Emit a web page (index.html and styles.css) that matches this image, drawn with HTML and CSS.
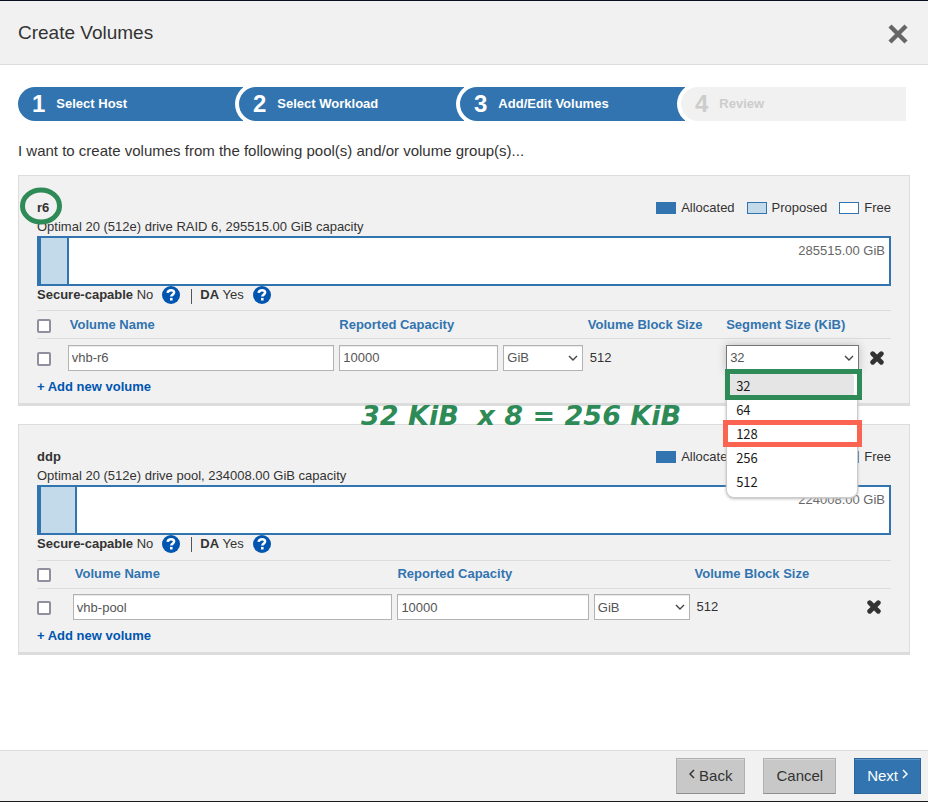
FILE: index.html
```html
<!DOCTYPE html>
<html lang="en">
<head>
<meta charset="utf-8">
<meta name="viewport" content="width=device-width, initial-scale=1">
<title>Create Volumes</title>
<link rel="stylesheet" href="styles.css">
</head>
<body>
<svg class="sprite" aria-hidden="true">
  <symbol id="help" viewBox="0 0 18 18">
    <circle cx="9" cy="9" r="9" fill="#0055b0"/>
    <path d="M5.6 6.9C5.9 5 7.3 4.2 9 4.2c1.8 0 3.1 1 3.1 2.4 0 2.1-2.8 1.9-2.8 4" fill="none" stroke="#fff" stroke-width="2.5"/>
    <rect x="8" y="11.9" width="2.6" height="2.6" fill="#fff"/>
  </symbol>
  <symbol id="remove" viewBox="0 0 14 14">
    <path d="M2.7 2.7l8.6 8.6M11.3 2.7l-8.6 8.6" fill="none" stroke="#333" stroke-width="4.8" stroke-linecap="round"/>
  </symbol>
</svg>

<header class="header">
  <h1 class="title">Create Volumes</h1>
  <button class="icon-button" type="button" aria-label="Close">
    <svg class="close-icon" viewBox="0 0 20 20"><path d="M2 2l16 16M18 2l-16 16" fill="none" stroke="#666" stroke-width="4.4"/></svg>
  </button>
</header>

<main class="content">
  <ol class="steps">
    <li class="step"><span class="step-number">1</span>Select Host</li>
    <li class="step"><span class="step-number">2</span>Select Workload</li>
    <li class="step"><span class="step-number">3</span>Add/Edit Volumes</li>
    <li class="step step-pending"><span class="step-number">4</span>Review</li>
  </ol>

  <p class="intro">I want to create volumes from the following pool(s) and/or volume group(s)...</p>

  <section class="panel">
    <div class="panel-head">
      <h2 class="panel-name">r6<svg class="name-ring" viewBox="0 0 42 38" aria-hidden="true"><ellipse cx="21" cy="19" rx="18.5" ry="16" fill="none" stroke="#2e8b57" stroke-width="5"/></svg></h2>
      <ul class="legend">
        <li><span class="swatch swatch-allocated"></span>Allocated</li>
        <li><span class="swatch swatch-proposed"></span>Proposed</li>
        <li><span class="swatch"></span>Free</li>
      </ul>
    </div>
    <p class="summary">Optimal 20 (512e) drive RAID 6, 295515.00 GiB capacity</p>
    <div class="capacity"><span class="proposed" style="width:3.3%"></span><span class="free">285515.00 GiB</span></div>
    <div class="facts">
      <span><b>Secure-capable</b> No</span>
      <button class="icon-button" type="button" aria-label="About secure-capable"><svg class="help-icon"><use href="#help"/></svg></button>
      <span class="divider"></span>
      <span><b>DA</b> Yes</span>
      <button class="icon-button" type="button" aria-label="About data assurance"><svg class="help-icon"><use href="#help"/></svg></button>
    </div>
    <table class="volumes volumes-segmented">
      <colgroup><col class="col-check"><col class="col-name"><col class="col-capacity"><col class="col-block"><col class="col-segment"><col></colgroup>
      <thead>
        <tr><th><input class="check" type="checkbox" aria-label="Select all r6 volumes"></th><th class="name-head">Volume Name</th><th>Reported Capacity</th><th>Volume Block Size</th><th>Segment Size (KiB)</th><th></th></tr>
      </thead>
      <tbody>
        <tr>
          <td><input class="check" type="checkbox" aria-label="Select vhb-r6"></td>
          <td class="field-cell"><input class="field" type="text" value="vhb-r6" aria-label="Volume name"></td>
          <td class="field-cell"><div class="pair"><input class="field" type="text" value="10000" aria-label="Reported capacity"><span class="select-wrap"><select class="field" aria-label="Capacity unit"><option>GiB</option></select><svg class="chevron" viewBox="0 0 10 6"><path d="M1 1l4 4 4-4"/></svg></span></div></td>
          <td class="block-cell">512</td>
          <td class="field-cell">
            <div class="select-wrap">
              <select class="field field-open" aria-label="Segment size (KiB)"><option>32</option><option>64</option><option>128</option><option>256</option><option>512</option></select>
              <svg class="chevron" viewBox="0 0 10 6"><path d="M1 1l4 4 4-4"/></svg>
              <ul class="menu" role="listbox" aria-label="Segment size options">
                <li class="option option-current" role="option" aria-selected="true">32</li>
                <li class="option" role="option">64</li>
                <li class="option" role="option">128</li>
                <li class="option" role="option">256</li>
                <li class="option" role="option">512</li>
              </ul>
              <span class="mark mark-green"></span>
              <span class="mark mark-red"></span>
            </div>
          </td>
          <td class="remove-cell"><button class="icon-button" type="button" aria-label="Remove vhb-r6"><svg class="remove-icon"><use href="#remove"/></svg></button></td>
        </tr>
      </tbody>
    </table>
    <a class="add" href="#">+ Add new volume</a>
    <p class="note">32 KiB  x 8 = 256 KiB</p>
  </section>

  <section class="panel">
    <div class="panel-head">
      <h2 class="panel-name">ddp</h2>
      <ul class="legend">
        <li><span class="swatch swatch-allocated"></span>Allocated</li>
        <li><span class="swatch swatch-proposed"></span>Proposed</li>
        <li><span class="swatch"></span>Free</li>
      </ul>
    </div>
    <p class="summary">Optimal 20 (512e) drive pool, 234008.00 GiB capacity</p>
    <div class="capacity"><span class="proposed" style="width:4.27%"></span><span class="free">224008.00 GiB</span></div>
    <div class="facts">
      <span><b>Secure-capable</b> No</span>
      <button class="icon-button" type="button" aria-label="About secure-capable"><svg class="help-icon"><use href="#help"/></svg></button>
      <span class="divider"></span>
      <span><b>DA</b> Yes</span>
      <button class="icon-button" type="button" aria-label="About data assurance"><svg class="help-icon"><use href="#help"/></svg></button>
    </div>
    <table class="volumes volumes-plain">
      <colgroup><col class="col-check"><col class="col-name"><col class="col-capacity"><col class="col-block"><col></colgroup>
      <thead>
        <tr><th><input class="check" type="checkbox" aria-label="Select all ddp volumes"></th><th class="name-head">Volume Name</th><th>Reported Capacity</th><th>Volume Block Size</th><th></th></tr>
      </thead>
      <tbody>
        <tr>
          <td><input class="check" type="checkbox" aria-label="Select vhb-pool"></td>
          <td class="field-cell"><input class="field" type="text" value="vhb-pool" aria-label="Volume name"></td>
          <td class="field-cell"><div class="pair"><input class="field" type="text" value="10000" aria-label="Reported capacity"><span class="select-wrap"><select class="field" aria-label="Capacity unit"><option>GiB</option></select><svg class="chevron" viewBox="0 0 10 6"><path d="M1 1l4 4 4-4"/></svg></span></div></td>
          <td class="block-cell">512</td>
          <td class="remove-cell"><button class="icon-button" type="button" aria-label="Remove vhb-pool"><svg class="remove-icon"><use href="#remove"/></svg></button></td>
        </tr>
      </tbody>
    </table>
    <a class="add" href="#">+ Add new volume</a>
  </section>
</main>

<footer class="footer">
  <button class="button" type="button"><svg class="arrow" viewBox="0 0 6 10"><path d="M5 1L1 5l4 4"/></svg>Back</button>
  <button class="button" type="button">Cancel</button>
  <button class="button button-primary" type="button">Next<svg class="arrow" viewBox="0 0 6 10"><path d="M1 1l4 4-4 4"/></svg></button>
</footer>
</body>
</html>
```
FILE: styles.css
```css
* { box-sizing: border-box; }

body {
  display: flex;
  flex-direction: column;
  min-height: 100vh;
  margin: 0;
  border-top: 1px solid #0b1020;
  border-bottom: 1px solid #1c1c1c;
  background: #fff;
  color: #333;
  font: 13px/20px "Liberation Sans", Arial, sans-serif;
}

h1, h2, p, ul, ol { margin: 0; padding: 0; }
ul, ol { list-style: none; }

.sprite { display: none; }

.header {
  display: flex;
  align-items: center;
  justify-content: space-between;
  height: 64px;
  padding: 0 20px 0 18px;
  border-bottom: 1px solid #dcdcdc;
  background: #f1f1f1;
}

.title { font-size: 19px; font-weight: 400; }

.icon-button {
  display: flex;
  padding: 0;
  border: 0;
  background: none;
}

.close-icon { width: 20px; height: 20px; margin-top: 3px; }

.content { flex: 1; padding: 22px 18px 0; }

.steps { display: flex; margin-right: 4px; }

.step {
  display: flex;
  flex: 1;
  align-items: center;
  gap: 11px;
  height: 34px;
  padding-left: 14px;
  border-radius: 17px 0 0 17px;
  background: #3174af;
  color: #fff;
  font-weight: 700;
}

.step + .step {
  margin-left: -4px;
  box-shadow: 0 0 0 4px #fff;
}

.step-number { font-size: 24px; }

.step-pending { background: #f1f1f1; color: #ccc; }

.intro { margin: 20px 0 14px; font-size: 15px; }

.panel {
  position: relative;
  margin-bottom: 18px;
  padding: 22px 18px 6px;
  border: 1px solid #dcdcdc;
  border-bottom-width: 3px;
  background: #f1f1f1;
}

.panel-head {
  display: flex;
  justify-content: space-between;
  line-height: 20px;
}

.panel-name { position: relative; font-size: 13px; }

.name-ring {
  position: absolute;
  top: -11px;
  left: -17px;
  width: 42px;
  height: 38px;
}

.legend { display: flex; gap: 12px; }
.legend li { display: flex; align-items: center; gap: 5px; }

.swatch {
  width: 20px;
  height: 12px;
  border: 1px solid #3174af;
  background: #fff;
}
.swatch-allocated { background: #3174af; }
.swatch-proposed { background: #c3daea; }

.summary { line-height: 18px; }

.capacity {
  display: flex;
  height: 50px;
  border: 2px solid #3174af;
  border-left-width: 4px;
  background: #fff;
}

.proposed { border-right: 2px solid #3174af; background: #c3daea; }

.free { flex: 1; padding: 3px 4px; color: #666; text-align: right; }

.facts { display: flex; align-items: center; height: 18px; line-height: 18px; }
.facts .icon-button { margin-left: 9px; }

.help-icon { width: 18px; height: 18px; }

.divider {
  width: 1px;
  height: 15px;
  margin: 2px 8px 0 11px;
  background: #555;
}

.volumes {
  width: 100%;
  margin-top: 6px;
  border-collapse: collapse;
  table-layout: fixed;
}
.volumes-plain { margin-top: 7px; }

.volumes th, .volumes td { padding: 0; text-align: left; }
.volumes th { height: 28px; color: #3174af; }
.volumes thead tr { border-top: 1px solid #dcdcdc; border-bottom: 1px solid #dcdcdc; }
.volumes td { height: 38px; }
.volumes .field-cell { padding-right: 5px; }
.volumes .name-head, .volumes .block-cell { padding-left: 2px; }

.volumes-segmented .col-check { width: 3.6%; }
.volumes-segmented .col-name { width: 31.8%; }
.volumes-segmented .col-capacity { width: 29.1%; }
.volumes-segmented .col-block { width: 16.2%; }
.volumes-segmented .col-segment { width: 16.2%; }
.volumes-segmented .remove-cell { padding-left: 6px; }

.volumes-plain .col-check { width: 4.2%; }
.volumes-plain .col-name { width: 38%; }
.volumes-plain .col-capacity { width: 34.8%; }
.volumes-plain .col-block { width: 20.2%; }

.check {
  display: block;
  width: 14px;
  height: 14px;
  margin: 2px 0 0;
  appearance: none;
  border: 2px solid #8f8f9d;
  border-radius: 2px;
  background: #fff;
}

.field {
  display: block;
  width: 100%;
  height: 26px;
  padding: 0 3px;
  appearance: none;
  border: 1px solid #b3b3b3;
  border-radius: 0;
  background: #fff;
  box-shadow: inset 0 1px 1px #e8e8e8;
  color: #555;
  font: 13px "Liberation Sans", Arial, sans-serif;
}
.field-open { border-color: #777; box-shadow: 0 0 8px #bbb; }

.pair { display: grid; grid-template-columns: 2fr 1fr; gap: 5px; }

.select-wrap { position: relative; display: block; }

.chevron {
  position: absolute;
  top: 10px;
  right: 5px;
  width: 10px;
  height: 6px;
  pointer-events: none;
}
.chevron path { fill: none; stroke: #444; stroke-width: 1.4; }

.menu {
  position: absolute;
  top: 26px;
  left: 0;
  z-index: 2;
  width: calc(100% - 1px);
  padding: 3px 3px;
  border: 1px solid #ccc;
  border-top: 0;
  border-radius: 0 0 8px 8px;
  background: #fff;
  box-shadow: 0 1px 3px #bbb;
}

.option {
  padding-left: 6px;
  border-radius: 3px;
  color: #1a1a1a;
  font: 13px/24px "Noto Sans CJK SC", sans-serif;
}
.option-current { background: #e5e5e5; }

.mark { position: absolute; z-index: 3; border: 5px solid #2e8b57; }
.mark-green { top: 24px; right: -3px; left: -1px; height: 31px; }
.mark-red { top: 75px; right: -3px; left: -3px; height: 27px; border-color: #fa6450; }

.remove-icon { width: 14px; height: 14px; }

.add {
  display: block;
  color: #0055b0;
  font-weight: 700;
  text-decoration: none;
}

.note {
  position: absolute;
  bottom: -29px;
  left: 342px;
  z-index: 1;
  color: #2e8b57;
  font: oblique 700 27px/32px "DejaVu Sans", sans-serif;
  white-space: pre;
}

.footer {
  display: flex;
  justify-content: flex-end;
  gap: 18px;
  padding: 7px 7px;
  border-top: 1px solid #dcdcdc;
  background: #f1f1f1;
}

.button {
  display: flex;
  align-items: center;
  gap: 4px;
  height: 36px;
  padding: 0 12px 1px;
  border: 1px solid #b0b0b0;
  border-bottom-color: #8f8f8f;
  background: #c8c8c8;
  box-shadow: inset 0 1px #d8d8d8;
  color: #333;
  font: 15px "Liberation Sans", Arial, sans-serif;
}

.button-primary {
  border-color: #2a659b;
  background: #3174af;
  box-shadow: inset 0 1px #5a92c4;
  color: #fff;
}

.arrow { width: 6px; height: 10px; margin-bottom: 3px; }
.arrow path { fill: none; stroke: currentColor; stroke-width: 1.5; }
```
